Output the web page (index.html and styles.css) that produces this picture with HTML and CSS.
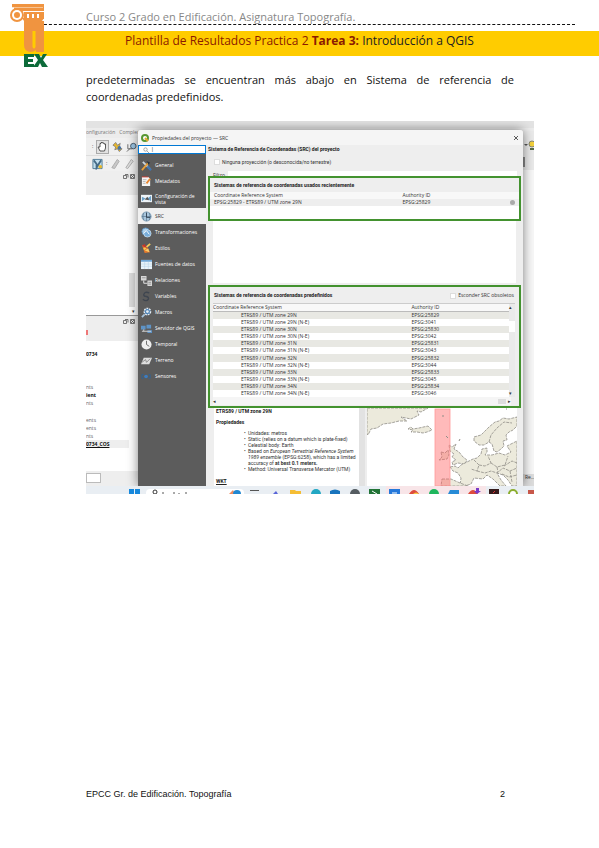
FILE: index.html
```html
<!DOCTYPE html>
<html lang="es">
<head>
  <meta charset="UTF-8">
  <title>Plantilla de Resultados Practica 2</title>
  <link rel="stylesheet" href="styles.css">
</head>
<body>

  <header class="page-header">
    <div class="course">Curso 2 Grado en Edificación. Asignatura Topografía.</div>
    <div class="rule"></div>
    <h1 class="band">Plantilla de Resultados Practica 2 <b>Tarea 3:</b> <span>Introducción a QGIS</span></h1>
    <svg class="logo" viewBox="0 0 38 64" aria-label="UEX">
      <g fill="#f09440">
        <path d="M2 0H34V3H2zM4 3H34V7H4zM15 8H34V10H15z"/>
        <circle cx="7" cy="11" r="7"/>
        <path d="M14 8H17V15H14zM19 8H22V15H19zM24 8H27V15H24zM29 8H34V15H29zM12 14H34L32 17H14z"/>
        <path d="M14 17H34V48H26v-2q-2 2-6 2q-6-1-6-7z"/>
      </g>
      <path d="M2 3.500H33" stroke="#fbd9b8" stroke-width=".7"/>
      <circle cx="7" cy="11" r="5" fill="#fff"/>
      <circle cx="7" cy="11" r="3" fill="#f09440"/>
      <path d="M22.500 27H25.500V43q-1.500 3-3 0z" fill="#ffcc00"/>
      <path d="M14 50H24V53H18V55H23V58H18V60H24V63H14zM24 50H29L31 54L33 50H37L33 56L38 63H32L30 59L28 63H23L28 56z" fill="#0d6b3a"/>
    </svg>
  </header>

  <main class="content">
    <p>predeterminadas se encuentran más abajo en Sistema de referencia de coordenadas predefinidos.</p>

    <div class="desktop">
      <!-- QGIS window behind the dialog -->
      <div class="qgis">
        <div class="strip"></div>
        <div class="menu">onfiguración &nbsp; Complementos &nbsp; Vectorial</div>
        <div class="tools">
          <span>:</span>
          <svg class="hand" viewBox="0 0 13 14"><rect x=".5" y=".5" width="12" height="13" fill="#e2e2e2" stroke="#aaa"/><path d="M4 11L2 7L4 7V3.500H5V2.500H6.500V3H8V4H9.500V8L8.500 11z" fill="#fff" stroke="#333" stroke-width=".8"/></svg>
          <svg viewBox="0 0 12 12"><path d="M1 4L4 1L6 4L9 2L8 6L11 8L8 11L6 8L3 9L4 6z" fill="#e5b72d" stroke="#667" stroke-width=".7"/><circle cx="8" cy="7" r="2" fill="#4872a5"/></svg>
          <svg viewBox="0 0 12 12"><path d="M1 11L5 7M2 3V8H7" stroke="#666" fill="none"/><circle cx="8" cy="5" r="3" fill="#9dc7e6" stroke="#456"/></svg>
        </div>
        <div class="tools second">
          <svg viewBox="0 0 12 12"><path d="M1 1H11V11H1z" fill="#c2dfee" stroke="#4d7895"/><path d="M2 2L5 6V10L8 5L10 2" stroke="#446b87" fill="none" stroke-width="2"/><circle cx="9" cy="9" r="2" fill="#e5b72d"/></svg>
          <span>:</span>
          <svg viewBox="0 0 12 12"><path d="M2 10L8 1L10 3L5 11z" fill="#c8c8c8" stroke="#aaa"/></svg>
          <svg viewBox="0 0 12 12"><path d="M2 10L8 1L10 3L4 11z" fill="#ddd" stroke="#aaa"/></svg>
        </div>
        <div class="dock"><svg viewBox="0 0 12 6"><path d="M.5 1.500h3v3h-3zM2 .5h3v3M7.500 .5h4v4h-4zM8 1l3 3M11 1l-3 3" fill="none" stroke="#555" stroke-width=".8"/></svg></div>
        <div class="panel tree"><i class="thumb"></i><i class="arrow">▾</i></div>
        <div class="dock mid"><svg viewBox="0 0 12 6"><path d="M.5 1.500h3v3h-3zM2 .5h3v3M7.500 .5h4v4h-4zM8 1l3 3M11 1l-3 3" fill="none" stroke="#555" stroke-width=".8"/></svg><i class="red"></i></div>
        <ul class="panel layers">
          <li class="strong first">0734</li>
          <li>nts</li>
          <li class="strong">ient</li>
          <li class="gap">nts</li>
          <li>ents</li>
          <li>ents</li>
          <li>nts</li>
          <li class="strong current">0734_COS</li>
        </ul>
        <div class="status"><i></i></div>
      </div>

      <div class="edge">
        <div class="edge-tools"><svg viewBox="0 0 12 12"><path d="M1 5h4L3 7z" fill="#555"/><circle cx="9" cy="5" r="3" fill="#f4d23c" stroke="#887"/><path d="M7 9h4v2H7z" fill="#576b46"/></svg><i></i></div>
        <div class="edge-foot">Re…</div>
      </div>

      <section class="dialog">
        <div class="titlebar">
          <svg viewBox="0 0 8 8"><circle cx="4" cy="4" r="3" fill="#fff" stroke="#589632" stroke-width="2"/><path d="M4 4L7 7" stroke="#e3a72f" stroke-width="2"/></svg>
          <span>Propiedades del proyecto — SRC</span>
          <button aria-label="Cerrar"><svg viewBox="0 0 6 6"><path d="M1 1L5 5M5 1L1 5" stroke="#333" stroke-width=".8"/></svg></button>
        </div>

        <div class="dialog-body">
          <nav class="sidebar">
            <label class="search">
              <svg viewBox="0 0 6 6"><circle cx="2.500" cy="2.500" r="1.700" fill="none" stroke="#888" stroke-width=".7"/><path d="M4 4L6 6" stroke="#888" stroke-width=".7"/></svg>
              <input type="text" value="|" aria-label="Buscar">
            </label>
            <a href="#"><svg viewBox="0 0 12 12"><path d="M2 2L10 10" stroke="#c9d5df" stroke-width="2"/><path d="M1 11L8 3" stroke="#e9a13a" stroke-width="2"/><path d="M6 1L10 3L8 5z" fill="#26323d"/><path d="M7 7L11 11" stroke="#4275af" stroke-width="2.500"/></svg>General</a>
            <a href="#"><svg viewBox="0 0 12 12"><path d="M1 1H8L10 3V11H1z" fill="#f4f4f4"/><path d="M2 4H6M2 6H5M2 8H5" stroke="#999" stroke-width=".7"/><path d="M6 8L10 3" stroke="#e9862f" stroke-width="2"/><path d="M1 1H8" stroke="#cf3d32"/></svg>Metadatos</a>
            <a href="#" class="two"><svg viewBox="0 0 12 12"><path d="M0 2H12V10H0z" fill="#eef3f7"/><path d="M1 4L5 6L1 9zM11 3L7 6L11 9z" fill="#6aa0c9"/><path d="M4 7L7 4L9 8z" fill="#555"/></svg><span>Configuración de vista</span></a>
            <a href="#" class="active"><svg viewBox="0 0 12 12"><circle cx="6" cy="6" r="5" fill="#a9c6dd" stroke="#7a99b2"/><path d="M1 6H11M6 1V11M3 2Q1 6 3 10M9 2Q11 6 9 10" stroke="#54748d" fill="none" stroke-width=".7"/><path d="M6 2V7H10" stroke="#345" fill="none"/></svg>SRC</a>
            <a href="#"><svg viewBox="0 0 12 12"><circle cx="5" cy="5" r="4" fill="#a9d0ec" stroke="#5e91bd"/><circle cx="7" cy="7" r="4" fill="#78aedb" stroke="#d9e9f4" stroke-width=".7"/><path d="M3 7L6 4L9 8" stroke="#fff" fill="none"/></svg>Transformaciones</a>
            <a href="#"><svg viewBox="0 0 12 12"><path d="M1 2L7 5L10 10L4 11z" fill="#e8792b"/><path d="M3 7L10 1" stroke="#f4cd57" stroke-width="2"/><path d="M1 3L4 1L7 6z" fill="#c3342f"/><path d="M4 8L8 6L9 10z" fill="#f5d06e"/></svg>Estilos</a>
            <a href="#"><svg viewBox="0 0 12 12"><path d="M0 1H12V11H0z" fill="#eaf4fb"/><path d="M0 1H12V3H0z" fill="#72a9d8"/><path d="M0 5.500H12M0 8H12M4 3V11M8 3V11" stroke="#b8d5e9" stroke-width=".6"/></svg>Fuentes de datos</a>
            <a href="#"><svg viewBox="0 0 12 12"><path d="M0 1H6V6H0zM7 6H12V12H7z" fill="#d7d7d7"/><path d="M1 3H5M8 8H11M8 10H11" stroke="#777" stroke-width=".7"/><path d="M3 6V9H7" stroke="#eee" fill="none"/></svg>Relaciones</a>
            <a href="#"><svg viewBox="0 0 12 12"><path d="M9 2Q4 0 3 4Q3 6 6 6Q9 7 8 9Q6 12 2 9" stroke="#3f4650" fill="none" stroke-width="1.500"/></svg>Variables</a>
            <a href="#"><svg viewBox="0 0 12 12"><circle cx="7" cy="5" r="3.500" fill="#4f83b5" stroke="#e6edf3" stroke-dasharray="2 1" stroke-width="1.500"/><circle cx="7" cy="5" r="1.500" fill="#e6edf3"/><path d="M1 11L4 8" stroke="#a8c4dc" stroke-width="2"/></svg>Macros</a>
            <a href="#"><svg viewBox="0 0 12 12"><path d="M0 3H5V7H0zM6 2H11V6H6zM7 8H12V11H7z" fill="#5e93c6"/><path d="M1 9H11M3 7V9" stroke="#d8d8d8"/></svg>Servidor de QGIS</a>
            <a href="#"><svg viewBox="0 0 12 12"><circle cx="6" cy="6" r="5.500" fill="#eee"/><path d="M6 2V6L9 8" stroke="#666" fill="none"/></svg>Temporal</a>
            <a href="#"><svg viewBox="0 0 12 12"><path d="M3 3H12L9 10H0z" fill="#dedede"/><path d="M1 8L5 5L6 8L10 4" stroke="#888" fill="none"/></svg>Terreno</a>
            <a href="#"><svg viewBox="0 0 12 12"><path d="M3 4H1V8H3M8 4H10V8H8" stroke="#2f6498" fill="none"/><circle cx="5.500" cy="6" r="2" fill="#3c7cc0"/></svg>Sensores</a>
          </nav>

          <div class="settings">
            <h2>Sistema de Referencia de Coordenadas (SRC) del proyecto</h2>
            <label class="none"><input type="checkbox"> Ninguna proyección (o desconocida/no terrestre)</label>
            <label class="filter">Filtro <input type="text" aria-label="Filtro"></label>

            <section class="group recent">
              <h3>Sistemas de referencia de coordenadas usados recientemente</h3>
              <table>
                <tr><th>Coordinate Reference System</th><th>Authority ID</th></tr>
                <tr><td>EPSG:25829 - ETRS89 / UTM zone 29N</td><td>EPSG:25829 <i class="dot"></i></td></tr>
              </table>
            </section>
            <div class="blank"></div>

            <section class="group predefined">
              <div class="group-head">
                <h3>Sistemas de referencia de coordenadas predefinidos</h3>
                <label><input type="checkbox"> Esconder SRC obsoletos</label>
              </div>
              <div class="scroll">
                <table>
                  <tr><th>Coordinate Reference System</th><th>Authority ID</th></tr>
                  <tr><td>ETRS89 / UTM zone 29N</td><td>EPSG:25829</td></tr>
                  <tr><td>ETRS89 / UTM zone 29N (N-E)</td><td>EPSG:3041</td></tr>
                  <tr><td>ETRS89 / UTM zone 30N</td><td>EPSG:25830</td></tr>
                  <tr><td>ETRS89 / UTM zone 30N (N-E)</td><td>EPSG:3042</td></tr>
                  <tr><td>ETRS89 / UTM zone 31N</td><td>EPSG:25831</td></tr>
                  <tr><td>ETRS89 / UTM zone 31N (N-E)</td><td>EPSG:3043</td></tr>
                  <tr><td>ETRS89 / UTM zone 32N</td><td>EPSG:25832</td></tr>
                  <tr><td>ETRS89 / UTM zone 32N (N-E)</td><td>EPSG:3044</td></tr>
                  <tr><td>ETRS89 / UTM zone 33N</td><td>EPSG:25833</td></tr>
                  <tr><td>ETRS89 / UTM zone 33N (N-E)</td><td>EPSG:3045</td></tr>
                  <tr><td>ETRS89 / UTM zone 34N</td><td>EPSG:25834</td></tr>
                  <tr><td>ETRS89 / UTM zone 34N (N-E)</td><td>EPSG:3046</td></tr>
                </table>
                <div class="vbar"><span>▴</span><i></i><span>▾</span></div>
              </div>
              <div class="hbar"><span>◂</span><i></i><span>▸</span></div>
            </section>

            <div class="info">
              <div class="details">
                <h3>ETRS89 / UTM zone 29N</h3>
                <h3>Propiedades</h3>
                <ul>
                  <li>Unidades: metros</li>
                  <li>Static (relies on a datum which is plate-fixed)</li>
                  <li>Celestial body: Earth</li>
                  <li>Based on <em>European Terrestrial Reference System 1989 ensemble</em> (EPSG:6258), which has a limited accuracy of <b>at best 0.1 meters.</b></li>
                  <li>Method: Universal Transverse Mercator (UTM)</li>
                </ul>
                <h3 class="wkt">WKT</h3>
              </div>
              <div class="info-bar"></div>
              <svg class="map" viewBox="0 0 150 78" preserveAspectRatio="none">
                <g fill="#eceadc" stroke="#8f8d86" stroke-width=".8" stroke-dasharray="3 1">
                  <path d="M0 0H61L54 4L50 3L52 7L44 11L34 9L40 13L32 13L24 15L16 16L10 20L4 21L1 27L0 26z"/>
                  <path d="M41 21L44 19L46 21L52 20L61 18L65 22L60 24L56 25L50 24L44 24L46 22z"/>
                  <path d="M82 37L85 39L89 36L87 41L92 44L96 49L100 52L98 56L91 55L86 57L85 54L89 52L85 49L87 46L83 43z"/>
                  <path d="M74 44L78 45L81 42L82 47L80 51L72 52L75 49z"/>
                  <path d="M107 29L114 27L122 19L128 14L132 13L136 10L142 11L150 9V18L146 22L142 24L139 27L140 32L136 33L137 38L134 41L130 44L127 43L125 36L122 34L117 37L112 37L107 33z"/>
                  <path d="M83 59L88 58L91 60L94 57L100 54L106 51L110 50L114 46L115 41L120 40L120 44L118 47L125 47L132 45L138 47L144 44L140 38L150 33V78H145L141 72L136 67L130 65L134 72L139 78H133L126 71L120 67L116 71L107 70L104 76L98 78H93L94 70L91 65L86 63z"/>
                  <path d="M75 71L84 71L93 75L101 78H74z"/>
                </g>
                <path d="M107 52L112 57L110 63L104 61M112 57L118 58L124 55L121 48M124 55L130 59L138 57L141 48M110 63L118 65L124 63L130 65L136 60L143 63L150 60M135 66L142 69L150 67M122 34L124 27L130 20L137 14L145 15M143 63L145 74M130 59L131 64M137 58L145 53L150 55" fill="none" stroke="#8f8d86" stroke-width=".8" stroke-dasharray="3 1"/>
                <rect x="68" y="1" width="15" height="77" fill="#ff6666" fill-opacity=".45" stroke="#f99" stroke-width=".8"/>
                <path d="M75 8h2M79 28l2 2M92 33l1-2M139 1l1 0" stroke="#8f8d86"/>
              </svg>
            </div>
          </div>
        </div>
      </section>

      <!-- top edge of the Windows taskbar -->
      <svg class="taskbar" viewBox="0 0 448 8" preserveAspectRatio="none">
        <path d="M0 0H448V8H0z" fill="#e9eef3"/>
        <path d="M300 0H400V8H300z" fill="#f8e5e8"/>
        <path d="M43 3h5v5h-5zM49 3h5v5h-5z" fill="#1688dc"/>
        <rect x="60" y="3" width="98" height="10" rx="4" fill="#fff"/>
        <circle cx="69" cy="6" r="2" fill="none" stroke="#333"/>
        <path d="M77 8v-2M88 8v-2M93 8v-1M100 8v-2" stroke="#555"/>
        <path d="M143 8l4-4 2 4z" fill="#f08a5d"/><circle cx="151" cy="8" r="4" fill="#2187d1"/>
        <path d="M164 4h9v1h-9z" fill="#555"/>
        <path d="M187 8l3-3 2 3z" fill="#5865d8"/>
        <path d="M204 4h5l1 1h5v3h-11z" fill="#f5bd35"/>
        <circle cx="230" cy="8" r="5" fill="#22a7c3"/>
        <path d="M244 5q5-3 10 0v3h-10z" fill="#1874bd"/>
        <circle cx="269" cy="8" r="5" fill="#555c61"/>
        <path d="M283 3h11v5h-11z" fill="#227437"/><path d="M286 5l5 3" stroke="#fff"/>
        <path d="M303 3h11v5h-11z" fill="#2478da"/><path d="M306 7h5" stroke="#fff"/>
        <path d="M323 8q5-8 10 0z" fill="#dd4b3c"/><path d="M327 8q3-3 6 0z" fill="#f7c944"/>
        <circle cx="348" cy="8" r="5" fill="#1eb65d"/>
        <path d="M364 4h9v4h-11z" fill="#278bd6"/>
        <path d="M382 8q5-8 10 0z" fill="#dd4b3c"/><path d="M390 2h3v3h2l-4 3-3-3h2z" fill="#7938c7"/>
        <path d="M403 3h10v5h-10z" fill="#351b1b"/><path d="M407 7l2-2" stroke="#d33"/>
        <circle cx="427" cy="8" r="4" fill="#fff" stroke="#8bad2e" stroke-width="2"/>
        <path d="M442 4h6v4h-6z" fill="#c75749"/>
      </svg>
    </div>
  </main>

  <footer class="page-footer">
    <span>EPCC Gr. de Edificación. Topografía</span>
    <span>2</span>
  </footer>

</body>
</html>
```
FILE: styles.css
```css
* {
  box-sizing: border-box;
}

body {
  margin: 0;
  min-height: 100vh;
  display: flex;
  flex-direction: column;
  background: #fff;
  color: #111;
  font-family: "Open Sans", "Noto Sans", sans-serif;
}

h1, h2, h3, p, ul {
  margin: 0;
  padding: 0;
}

i {
  font-style: normal;
}

/* header */
.page-header {
  position: relative;
  padding-top: 9px;
}

.course {
  height: 15px;
  padding-left: 86px;
  color: #888;
  font-size: 11px;
  line-height: 16px;
}

.rule {
  margin: 0 24px;
  border-top: 1px dashed #111;
}

.band {
  height: 25px;
  margin-top: 6px;
  background: #ffcc00;
  color: #8b1a00;
  font-size: 12px;
  font-weight: 400;
  line-height: 19px;
  text-align: center;
}

.band span {
  color: #222;
}

.logo {
  position: absolute;
  left: 10px;
  top: 4px;
  width: 38px;
  height: 64px;
}

/* page text */
.content {
  padding: 15px 65px 0 86px;
}

.content p {
  margin: 0 20px 16px 0;
  font-size: 11px;
  line-height: 17px;
  text-align: justify;
}

/* screenshot */
.desktop {
  position: relative;
  height: 373px;
  overflow: hidden;
  display: flex;
  justify-content: space-between;
  background: #fff;
  color: #333;
  font-size: 5px;
  line-height: 7px;
}

.qgis {
  width: 100%;
  display: flex;
  flex-direction: column;
}

.strip {
  height: 7px;
  background: #e3e3e3;
}

.menu {
  height: 10px;
  padding-top: 1px;
  background: #ececec;
  color: #777;
}

.tools {
  display: flex;
  align-items: center;
  gap: 3px;
  height: 17px;
  padding-left: 6px;
  background: #f0f0f0;
}

.tools svg {
  width: 11px;
  height: 12px;
}

.tools .hand {
  width: 13px;
  height: 14px;
}

.tools.second {
  height: 16px;
  border-top: 1px solid #ddd;
}

.dock {
  width: 52px;
  height: 24px;
  padding: 3px 3px 0 0;
  background: #eee;
}

.dock svg {
  display: block;
  width: 12px;
  height: 6px;
  margin-left: auto;
}

.dock.mid {
  height: 26px;
  border-top: 1px solid #999;
}

.red {
  display: block;
  width: 2px;
  height: 5px;
  margin-top: 5px;
  background: #e77;
}

.panel {
  width: 52px;
  background: #fff;
}

.tree {
  height: 120px;
  display: flex;
  flex-direction: column;
  align-items: flex-end;
  justify-content: flex-end;
  padding-right: 3px;
}

.thumb {
  width: 6px;
  height: 34px;
  background: #ddd;
}

.arrow {
  line-height: 8px;
}

.layers {
  flex: 1;
  list-style: none;
  line-height: 8px;
  color: #666;
}

.layers .first {
  margin: 9px 0 25px;
}

.layers .gap {
  margin-bottom: 9px;
}

.strong {
  color: #111;
  font-weight: 700;
}

.current {
  width: 43px;
  background: #eee;
  text-decoration: underline;
}

.status {
  height: 23px;
  padding: 2px 0;
  background: #eee;
}

.status i {
  display: block;
  width: 15px;
  height: 10px;
  background: #fff;
  border: 1px solid #bbb;
}

.edge {
  position: absolute;
  right: 0;
  top: 10px;
  bottom: 8px;
  width: 11px;
  display: flex;
  flex-direction: column;
  justify-content: space-between;
  background: #f8f8f8;
}

.edge-tools {
  height: 39px;
  padding-top: 8px;
  background: #eaeaea;
}

.edge-tools svg {
  display: block;
  width: 12px;
  height: 12px;
}

.edge-tools i {
  display: block;
  width: 2px;
  height: 10px;
  margin-top: 6px;
  background: #888;
}

.edge-foot {
  height: 12px;
  padding-left: 2px;
  background: #ddd;
}

.taskbar {
  position: absolute;
  left: 0;
  bottom: 0;
  width: 100%;
  height: 8px;
}

/* project properties dialog */
.dialog {
  position: absolute;
  left: 52px;
  right: 11px;
  top: 9px;
  height: 356px;
  display: flex;
  flex-direction: column;
  background: #eee;
  border-radius: 3px 3px 0 0;
  box-shadow: 0 0 11px rgba(0, 0, 0, 0.5);
}

.titlebar {
  display: flex;
  align-items: center;
  gap: 3px;
  height: 15px;
  padding: 1px 4px 0 3px;
  background: #f5f5f5;
  border-radius: 3px 3px 0 0;
}

.titlebar svg {
  display: block;
  width: 8px;
  height: 8px;
}

.titlebar button {
  margin-left: auto;
  padding: 0;
  border: none;
  background: none;
}

.titlebar button svg {
  width: 6px;
  height: 6px;
}

.dialog-body {
  flex: 1;
  display: flex;
  min-height: 0;
}

.sidebar {
  width: 68px;
  background: #5c5c5c;
}

.search {
  display: flex;
  align-items: center;
  height: 9px;
  margin-bottom: 3px;
  padding-left: 4px;
  background: #fff;
  border: 1px solid #0078d4;
}

.search svg {
  width: 6px;
  height: 6px;
}

.search input {
  width: 40px;
  height: 7px;
  padding: 0 2px;
  border: none;
  background: none;
  color: #000;
  font: inherit;
}

.sidebar a {
  display: flex;
  align-items: center;
  gap: 3px;
  height: 16px;
  padding-left: 3px;
  color: #fff;
  line-height: 6px;
  text-decoration: none;
}

.sidebar a svg {
  flex: none;
  width: 11px;
  height: 11px;
}

.sidebar .two {
  height: 19px;
}

.sidebar .active {
  background: #f0f0f0;
  color: #333;
}

.settings {
  flex: 1;
  min-width: 0;
  display: flex;
  flex-direction: column;
  padding: 1px 2px 0;
}

h2, h3, .none, .details {
  font-family: Roboto, "Open Sans", sans-serif;
}

h2, h3 {
  color: #222;
  font-size: 5px;
  font-weight: 700;
  line-height: 7px;
}

input[type="checkbox"] {
  appearance: none;
  width: 6px;
  height: 6px;
  margin: 0;
  background: #fff;
  border: 1px solid #ddd;
}

.none,
.group-head label {
  display: flex;
  align-items: center;
  gap: 2px;
}

.none {
  margin: 5px 0 0 6px;
  line-height: 8px;
}

.filter {
  display: flex;
  align-items: center;
  gap: 3px;
  height: 8px;
  margin: 5px 4px 0 5px;
}

.filter input {
  flex: 1;
  height: 8px;
  padding: 0;
  border: none;
  background: #fff;
}

.group {
  border: 2px solid #43922f;
}

.recent {
  height: 45px;
  margin-top: -3px;
  background: linear-gradient(#eee 14px, #fff 14px);
}

.recent h3 {
  padding: 4px 0 3px 4px;
}

table {
  width: 100%;
  border-collapse: collapse;
  table-layout: fixed;
}

th, td {
  padding: 0;
  overflow: hidden;
  font-weight: 400;
  line-height: 7px;
  text-align: left;
  white-space: nowrap;
}

.recent th:first-child {
  width: 61%;
}

.recent th,
.recent td {
  padding-left: 4px;
}

.recent th {
  background: #f8f8f8;
}

.recent td {
  background: #eee;
}

.dot {
  float: right;
  width: 5px;
  height: 5px;
  margin: 1px 4px 0 0;
  background: #aaa;
  border-radius: 50%;
}

.blank {
  height: 62px;
  margin: 0 5px 2px;
  background: #fff;
}

.predefined {
  height: 123px;
  background: #eee;
}

.group-head {
  display: flex;
  justify-content: space-between;
  height: 16px;
  padding: 5px 5px 0 4px;
}

.group-head label {
  height: 7px;
}

.scroll {
  display: flex;
  height: 94px;
  margin: 0 4px 0 3px;
  border-top: 1px solid #ccc;
}

.scroll table {
  height: 93px;
}

.scroll th {
  background: #f8f8f8;
  border-bottom: 1px solid #bbb;
}

.scroll th:first-child {
  width: 67%;
}

.scroll td:first-child {
  padding-left: 28px;
}

.scroll tr:nth-child(even) td {
  background: #e8e8e3;
}

.scroll tr:nth-child(odd) td {
  background: #fff;
}

.vbar {
  width: 6px;
  display: flex;
  flex-direction: column;
  justify-content: space-between;
  background: #eaeaea;
}

.vbar i {
  height: 11px;
  margin-bottom: 48px;
  background: #fff;
}

.hbar {
  display: flex;
  align-items: center;
  gap: 2px;
  height: 8px;
  margin: 0 8px 0 3px;
  background: #f5f5f5;
}

.hbar i {
  width: 8px;
  height: 5px;
  margin-left: auto;
  background: #ddd;
}

.info {
  flex: 1;
  display: flex;
  min-height: 0;
  padding: 0 4px 0 6px;
}

.details {
  width: 145px;
  overflow: hidden;
  background: #fff;
}

.details h3 {
  padding-left: 2px;
  line-height: 6px;
}

.details h3 + h3 {
  margin: 5px 0;
}

.details ul {
  padding-left: 34px;
  line-height: 6px;
  list-style: none;
}

.details li::before {
  content: "•";
  float: left;
  margin-left: -4px;
}

.details .wkt {
  margin-top: 6px;
  text-decoration: underline;
}

.info-bar {
  width: 6px;
  margin-right: 2px;
  background: #e2e2e2;
}

.map {
  flex: 1;
  min-width: 0;
  height: 78px;
  background: #fff;
}

/* footer */
.page-footer {
  display: flex;
  justify-content: space-between;
  margin-top: auto;
  padding: 0 94px 48px 86px;
  font-family: "Liberation Sans", Arial, sans-serif;
  font-size: 9px;
  line-height: 12px;
}
```
